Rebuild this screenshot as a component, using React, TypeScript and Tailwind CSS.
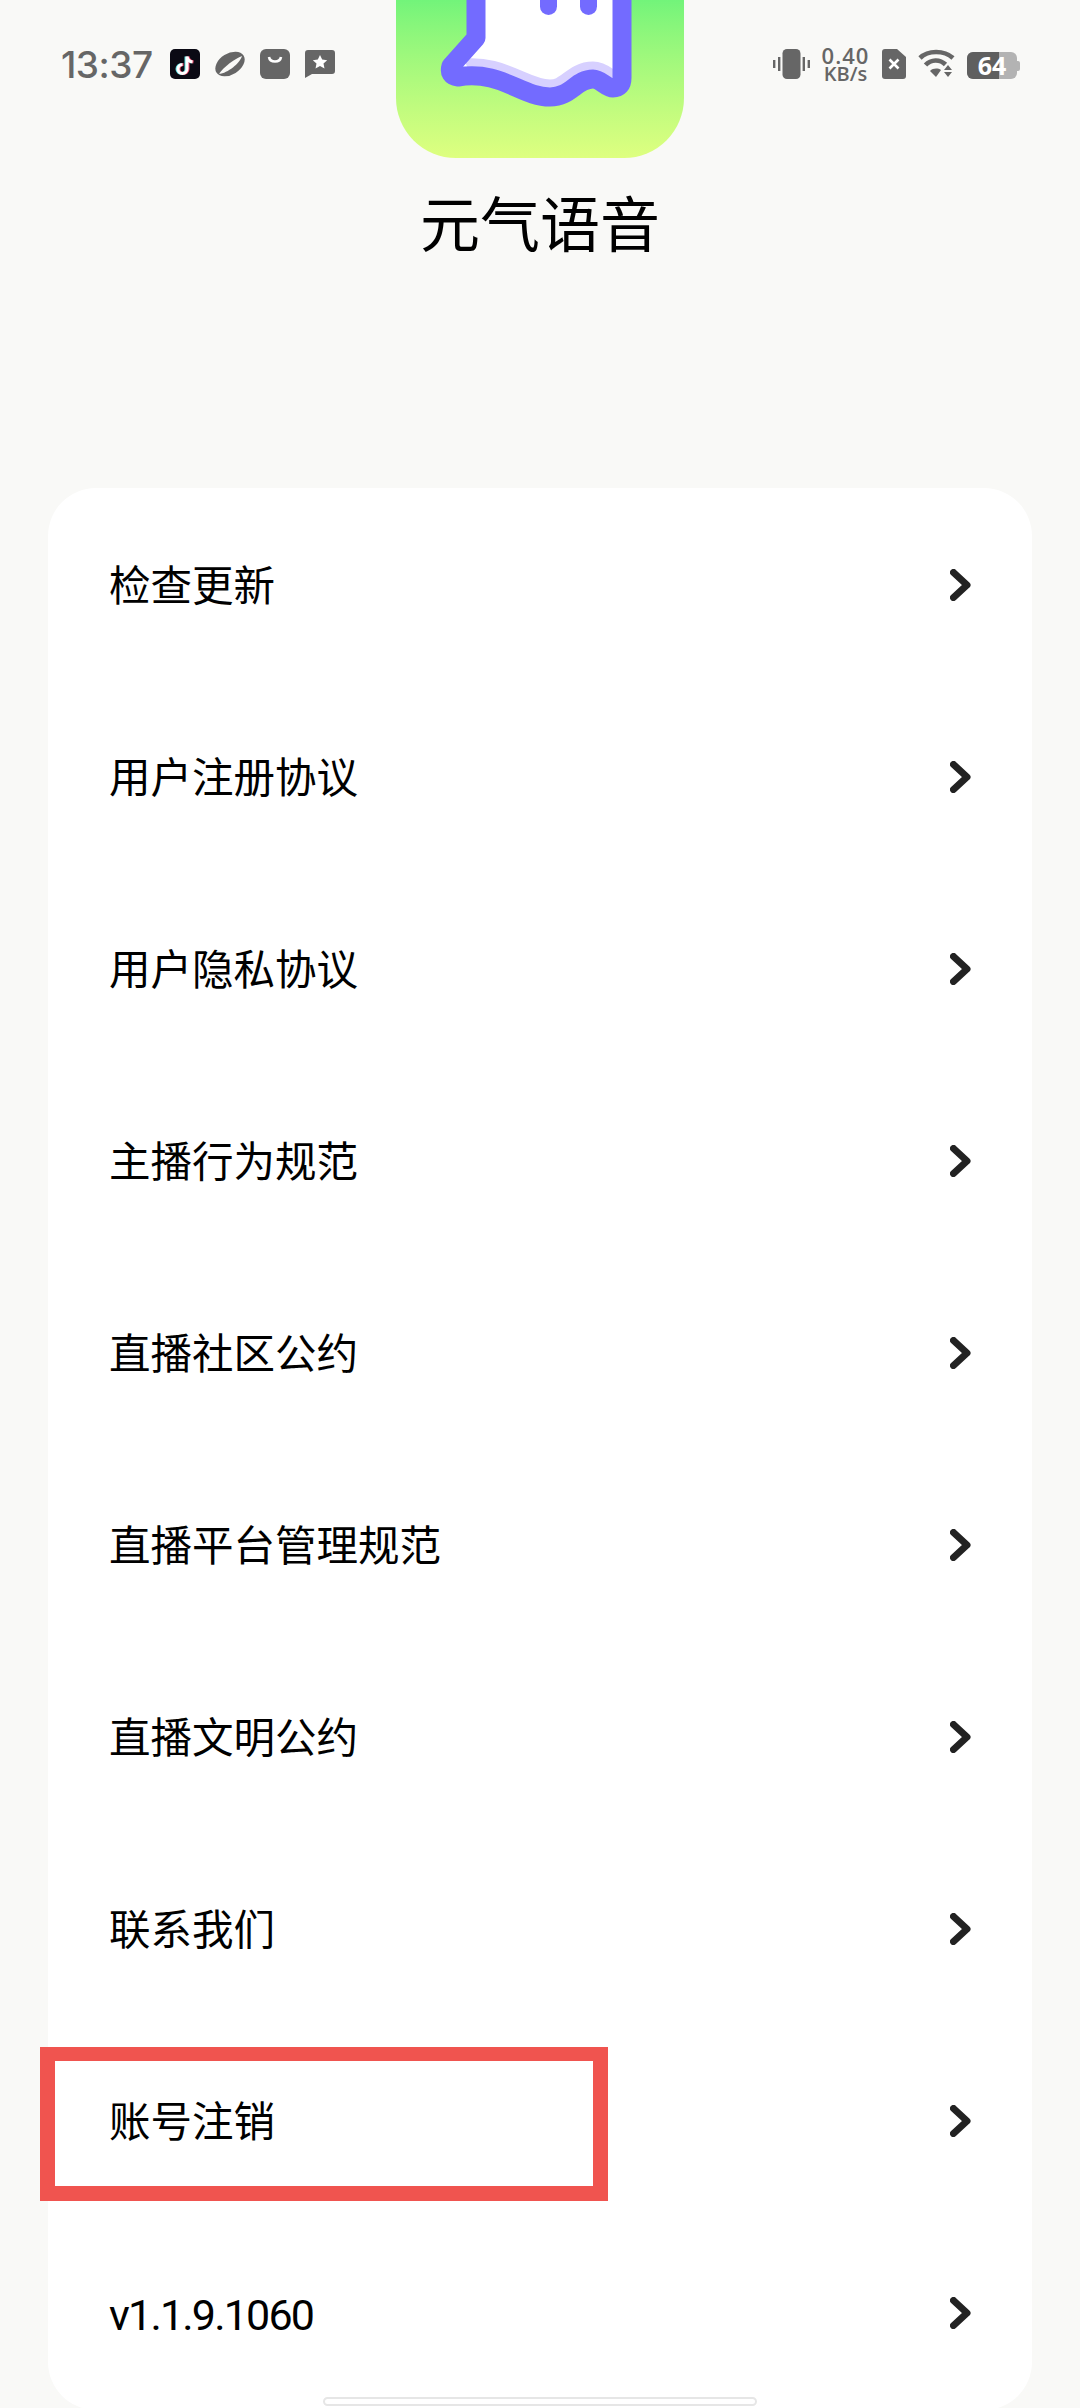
const rows = [
  "检查更新",
  "用户注册协议",
  "用户隐私协议",
  "主播行为规范",
  "直播社区公约",
  "直播平台管理规范",
  "直播文明公约",
  "联系我们",
  "账号注销",
  "v1.1.9.1060",
];

const GHOST =
  "M80 -10 V38 L55 66 Q52 76 62 77 C105 70 125 97 154 97 C175 97 180 79 197 79 C205 79 210 88 217 88 Q226 88 226 78 V-10 Z";
const WAVE =
  "M55 66 Q52 76 62 77 C105 70 125 97 154 97 C175 97 180 79 197 79 C205 79 210 88 217 88";

function AppIcon() {
  return (
    <div className="h-[158px] w-[288px] overflow-hidden rounded-b-[60px] bg-gradient-to-b from-[#72f47a] to-[#deff80]">
      <svg width="288" height="158" viewBox="0 0 288 158">
        <defs>
          <clipPath id="ghost">
            <path d={GHOST} />
          </clipPath>
        </defs>
        <path d={GHOST} fill="#ffffff" />
        <g clipPath="url(#ghost)">
          <path d={WAVE} fill="none" stroke="#d7d0ff" strokeWidth="35" />
        </g>
        <path d={GHOST} fill="none" stroke="#736bff" strokeWidth="19" strokeLinejoin="round" />
        <rect x="144" y="-10" width="17" height="25" rx="8.5" fill="#736bff" />
        <rect x="184" y="-10" width="17" height="25" rx="8.5" fill="#736bff" />
      </svg>
    </div>
  );
}

function TikTok() {
  const note = "M17 7 V19.5 a4.5 4.5 0 1 1 -4.5 -4.5 M17 7 c0.5 3 2.5 5 5.5 5.5";
  return (
    <svg width="30" height="30" viewBox="0 0 30 30">
      <rect width="30" height="30" rx="5" fill="#0b0a14" />
      <path d={note} fill="none" stroke="#5fe3e6" strokeWidth="3" transform="translate(-1 0.5)" />
      <path d={note} fill="none" stroke="#f0476b" strokeWidth="3" transform="translate(1 0.5)" />
      <path d={note} fill="none" stroke="#ffffff" strokeWidth="3" transform="translate(0 0.5)" />
    </svg>
  );
}

function Planet() {
  return (
    <svg width="30" height="30" viewBox="0 0 30 30">
      <g transform="rotate(-32 15 15)">
        <ellipse cx="15" cy="15" rx="16" ry="10.5" fill="#666666" />
        <path d="M0.5 17.5 C8 14 22 13 29.5 14.5 C24 19.5 8 21.5 0.5 17.5 Z" fill="#f9f9f7" />
      </g>
    </svg>
  );
}

function Bag() {
  return (
    <svg width="30" height="30" viewBox="0 0 30 30">
      <rect width="30" height="30" rx="6" fill="#666666" />
      <path d="M9 8 C10 14 20 14 21 8" fill="none" stroke="#ffffff" strokeWidth="2.6" />
    </svg>
  );
}

function StarChat() {
  return (
    <svg width="30" height="30" viewBox="0 0 30 30">
      <path d="M3 1 H27 Q30 1 30 4 V22 Q30 25 27 25 H7 L0 29 V4 Q0 1 3 1 Z" fill="#666666" />
      <path
        d="M15 6 L17.2 10.6 L22.2 11.2 L18.5 14.6 L19.5 19.6 L15 17.1 L10.5 19.6 L11.5 14.6 L7.8 11.2 L12.8 10.6 Z"
        fill="#ffffff"
      />
    </svg>
  );
}

function Vibrate() {
  return (
    <svg width="37" height="30" viewBox="0 0 37 30">
      <rect x="9.5" y="0" width="18" height="30" rx="4.5" fill="#666666" />
      <rect x="5" y="8" width="2.4" height="14" fill="#666666" />
      <rect x="0" y="11" width="2.4" height="8" fill="#666666" />
      <rect x="29.6" y="8" width="2.4" height="14" fill="#666666" />
      <rect x="34.6" y="11" width="2.4" height="8" fill="#666666" />
    </svg>
  );
}

function Sim() {
  return (
    <svg width="24" height="30" viewBox="0 0 24 30">
      <path d="M3 0 H15 L24 8 V27 Q24 30 21 30 H3 Q0 30 0 27 V3 Q0 0 3 0 Z" fill="#666666" />
      <path d="M7.5 10.5 L16.5 19.5 M16.5 10.5 L7.5 19.5" stroke="#ffffff" strokeWidth="2.6" />
    </svg>
  );
}

function Wifi() {
  return (
    <svg width="37" height="30" viewBox="0 0 37 30">
      <path d="M2 9 C10 1 26 1 35 9" fill="none" stroke="#666666" strokeWidth="4.6" />
      <path d="M7.5 16 C13 10 22 10 27.5 15.5" fill="none" stroke="#666666" strokeWidth="4.6" />
      <path d="M12 22 C15 19 20 19 23 21 L18 28 Z" fill="#666666" />
      <path d="M30 16 L34 21 H26 Z M26 23 H34 L30 28 Z" fill="#666666" />
    </svg>
  );
}

function Battery() {
  return (
    <div className="mt-[3px] flex h-[27px] w-[53px] items-center">
      <div className="relative flex h-full w-[50px] items-center justify-center rounded-[6px] bg-[#b3b3b3]">
        <div className="absolute inset-y-0 left-0 w-[32px] rounded-l-[6px] bg-[#5f5f5f]" />
        <span className="relative font-['Open_Sans',sans-serif] text-[25px] font-bold leading-none text-white">
          64
        </span>
      </div>
      <div className="h-[10px] w-[3px] rounded-r-[2px] bg-[#b3b3b3]" />
    </div>
  );
}

function StatusBar() {
  return (
    <div className="absolute inset-x-0 top-[49px] flex h-[30px] items-center justify-between pl-[61px] pr-[60px]">
      <div className="flex items-center">
        <span className="mr-[16px] w-[93px] font-['Inter',sans-serif] text-[37px] font-medium leading-none tracking-[-0.5px] text-[#666666]">
          13:37
        </span>
        <div className="flex items-center gap-[15px]">
          <TikTok />
          <Planet />
          <Bag />
          <StarChat />
        </div>
      </div>
      <div className="flex items-center">
        <Vibrate />
        <div className="ml-[10px] mr-[11px] flex h-[38px] w-[51px] flex-col items-center justify-center font-['Open_Sans',sans-serif] font-semibold text-[#666666]">
          <span className="text-[22px] leading-[20px] tracking-[1px]">0.40</span>
          <span className="text-[20px] leading-[18px]">KB/s</span>
        </div>
        <Sim />
        <div className="mx-[12px]">
          <Wifi />
        </div>
        <Battery />
      </div>
    </div>
  );
}

function Chevron() {
  return (
    <svg width="21" height="32" viewBox="0 0 21 32" className="mb-[3px] mr-[13px]">
      <path
        d="M3.5 3.5 L17 16 L3.5 28.5"
        fill="none"
        stroke="#222222"
        strokeWidth="7"
        strokeLinecap="round"
        strokeLinejoin="round"
      />
    </svg>
  );
}

export default function App() {
  return (
    <div className="relative h-[2408px] w-[1080px] overflow-hidden bg-[#f9f9f7] font-['Roboto','Noto_Sans_CJK_SC',sans-serif]">
      <StatusBar />

      <div className="flex flex-col items-center">
        <AppIcon />
        <h1 className="mt-[27px] font-['Noto_Sans_CJK_SC',sans-serif] text-[60px] font-normal leading-[72px] text-black">
          元气语音
        </h1>
      </div>

      <div className="mx-[48px] mt-[231px] rounded-[48px] bg-white pt-[2px]">
        {rows.map((label, i) => (
          <div key={label} className="flex h-[192px] items-center justify-between pl-[61px] pr-[48px]">
            <span
              className={
                i === 9
                  ? "mt-[3px] text-[43px] leading-none tracking-[-1.8px] text-black"
                  : "mt-[2px] text-[41.5px] leading-none text-black"
              }
            >
              {label}
            </span>
            <Chevron />
          </div>
        ))}
      </div>

      {/* red annotation box */}
      <div className="absolute left-[40px] top-[2047px] h-[154px] w-[568px] border-x-[15px] border-b-[15px] border-t-[14px] border-[#f0544f]" />

      {/* home indicator */}
      <div className="absolute bottom-[2px] left-[323px] h-[9px] w-[434px] rounded-full border-2 border-[#e6e6e6] bg-white" />
    </div>
  );
}
